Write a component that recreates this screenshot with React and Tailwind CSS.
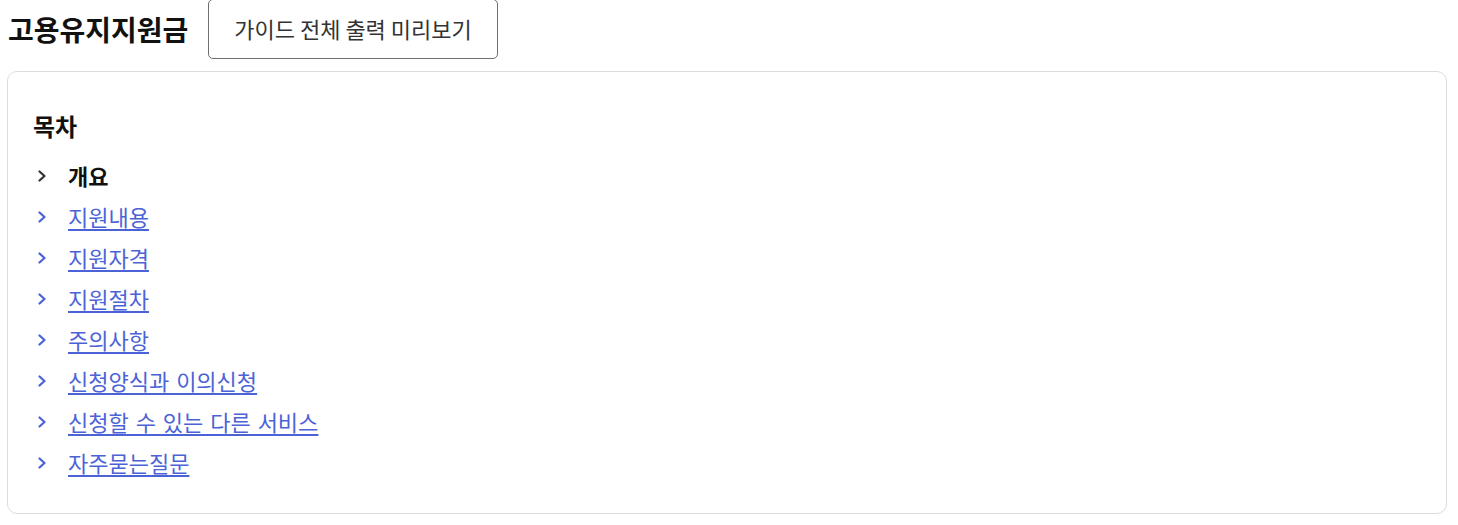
import { useState } from 'react';

const TOC = ['개요', '지원내용', '지원자격', '지원절차', '주의사항', '신청양식과 이의신청', '신청할 수 있는 다른 서비스', '자주묻는질문'];

function Chevron({ className }) {
  return (
    <svg width="12" height="14" viewBox="0 0 12 14" fill="none" className={className}>
      <path d="M3.5 2.5 8.5 7l-5 4.5" stroke="currentColor" strokeWidth="2.3" strokeLinecap="round" strokeLinejoin="round" />
    </svg>
  );
}

export default function App() {
  const [active] = useState(0);

  return (
    <div className="min-h-screen bg-white px-[7px] text-[#111] [word-spacing:2px]" style={{ fontFamily: '"Noto Sans CJK KR", "Noto Sans", sans-serif' }}>
      {/* Header */}
      <div className="flex items-center gap-[20px] h-[59px] -mt-px">
        <h1 className="pl-px text-[28px] font-bold">고용유지지원금</h1>
        <button className="h-[60px] px-[25px] border border-[#707070] rounded-[5px] text-[22px] text-[#333] bg-white">
          가이드 전체 출력 미리보기
        </button>
      </div>

      {/* TOC card */}
      <div className="mt-[13px] w-[1440px] border border-[#dcdcdc] rounded-[10px] pt-[39px] pb-[30px] px-[25px]">
        <h2 className="text-[24px] font-bold leading-[30px] text-[#111]">목차</h2>
        <ul className="mt-[14px]">
          {TOC.map((t, i) => (
            <li key={t} className="flex items-center h-[41px]">
              <Chevron className={`ml-[3px] mr-[20px] ${i === active ? 'text-[#333]' : 'text-[#4b63d6]'}`} />
              {i === active ? (
                <span className="text-[22px] font-bold text-[#111]">{t}</span>
              ) : (
                <a href="#" className="text-[22px] text-[#4b63d6] underline underline-offset-[3px]">{t}</a>
              )}
            </li>
          ))}
        </ul>
      </div>
    </div>
  );
}
